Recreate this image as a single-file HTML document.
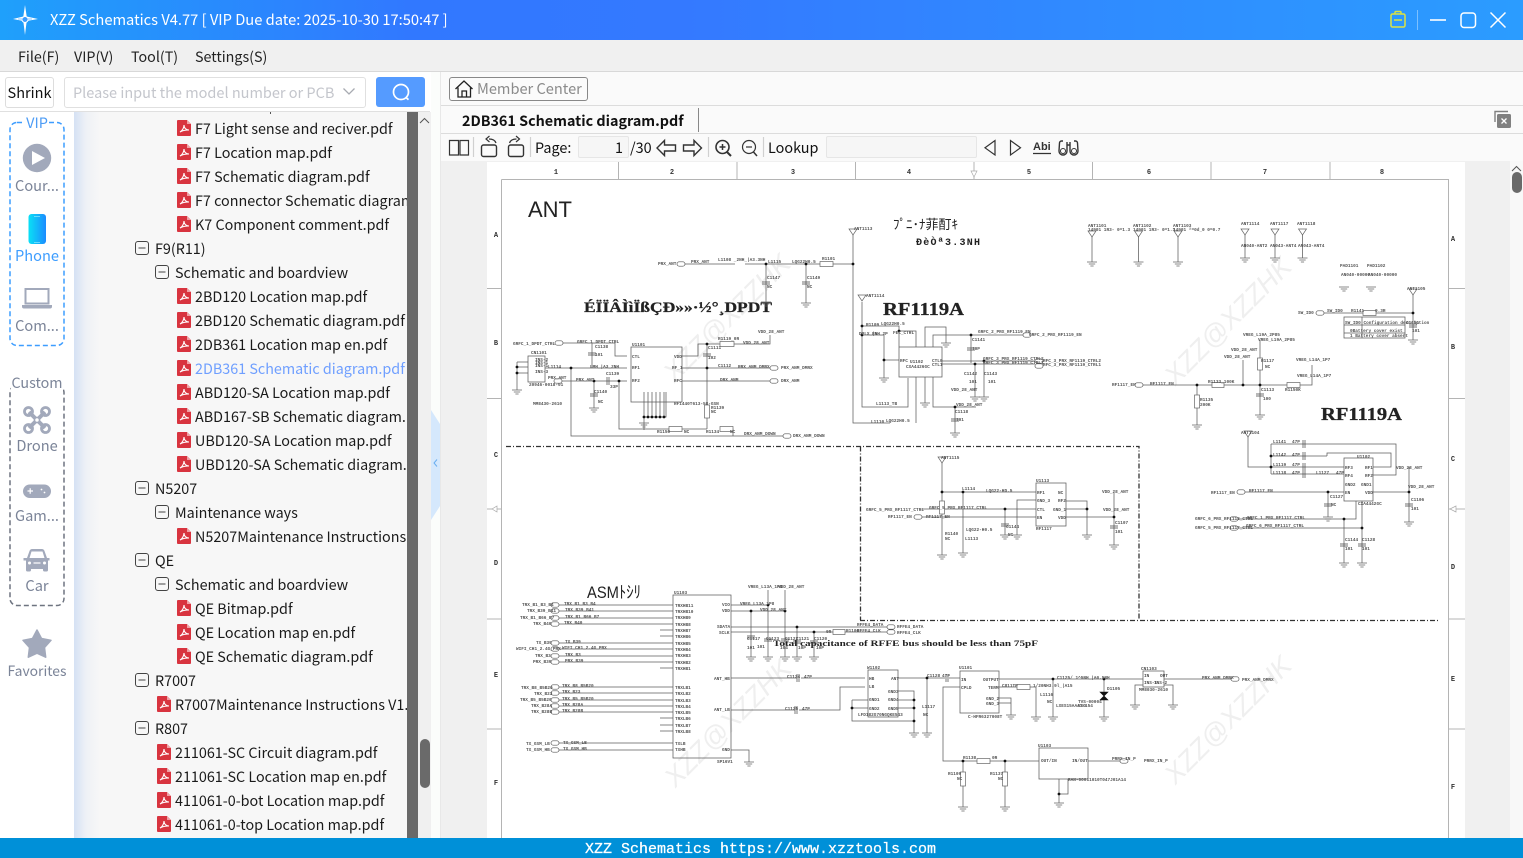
<!DOCTYPE html>
<html><head><meta charset="utf-8"><title>XZZ Schematics</title>
<style>
html,body{margin:0;padding:0;width:1523px;height:858px;overflow:hidden;background:#fff}
body{position:relative;font-family:"Noto Sans CJK SC","Liberation Sans",sans-serif;font-size:14.35px;color:#222}
.a{position:absolute;white-space:nowrap}
#tree{position:absolute;left:74px;top:112px;width:333px;height:726px;overflow:hidden;background:linear-gradient(90deg,#d5e1f4 0,#eef1f6 12px,#f7f7f7 26px);padding-top:5px;box-sizing:border-box}
.r{position:relative;height:24px;line-height:24px;white-space:nowrap;color:#1a1a1a;font-size:14.35px}
.r svg{position:absolute}
.f3{padding-left:121px}.f3 svg{left:103px;top:3px}
.f2{padding-left:101px}.f2 svg{left:83px;top:3px}
.m1{padding-left:81px}.m1 svg{left:61px;top:4px}
.m2{padding-left:101px}.m2 svg{left:81px;top:4px}
.lb{position:absolute;width:74px;left:0;text-align:center;color:#7b8498;font-size:14.6px;line-height:20px}
text{font-family:"Liberation Mono",monospace}
.t{font-size:4.4px;font-weight:bold;fill:#555}
.h{font-weight:bold;fill:#222}
.sl{font-family:"Liberation Serif",serif;font-weight:bold;fill:#222}
.w{font-family:"Liberation Sans",sans-serif;font-size:27px;fill:#efefef;font-style:italic}
</style></head><body>
<svg width="0" height="0" style="position:absolute"><defs>
<symbol id="pdf" viewBox="0 0 14 16"><path d="M1 0h9l4 4v11a1 1 0 0 1-1 1H1a1 1 0 0 1-1-1V1a1 1 0 0 1 1-1z" fill="#d8343f"/><path d="M10 0l4 4h-4z" fill="#f0a0a5"/><path d="M3 12c2-1 4-4 4-7 0 3 2 5 5 5-3 0-6 0-9 2z" fill="none" stroke="#fff" stroke-width="1.1"/></symbol>
<symbol id="min" viewBox="0 0 14 14"><rect x=".5" y=".5" width="13" height="13" rx="2.5" fill="none" stroke="#444"/><path d="M3.5 7h7" stroke="#444"/></symbol>
<g id="g"><path d="M-5 0h10M-3.2 2h6.4M-1.6 4h3.2" fill="none" stroke="#666" stroke-width=".7"/></g>
<g id="ant"><path d="M-4-3h8L0 3z" fill="none" stroke="#666" stroke-width=".7"/></g>
<g id="cap"><path d="M-4-1h8M-4 1h8" fill="none" stroke="#444" stroke-width=".8"/></g>
<g id="port"><rect x="0" y="-2.2" width="8" height="4.4" rx="2.2" fill="#fff" stroke="#555" stroke-width=".7"/></g>
</defs></svg>

<!-- title bar -->
<div class="a" style="left:0;top:0;width:1523px;height:40px;background:linear-gradient(90deg,#1fa0fb 0,#3178ff 27%,#3479ff 45%,#2f8dff 75%,#2b9cff 100%)"></div>
<svg class="a" style="left:10px;top:4px" width="32" height="32" viewBox="0 0 32 32"><path d="M15 1l1.700 11.500L28 15l-11.300 2L15 31l-1.700-14L3 15l10.300-2.500z" fill="#fff"/><circle cx="15" cy="15.500" r="3" fill="#3b9cff" stroke="#fff"/><path d="M8 15h14" stroke="#3b9cff" stroke-width=".6"/></svg>
<div class="a" style="left:50px;top:9px;color:#fff;line-height:22px;font-size:14.7px">XZZ Schematics V4.77 [ VIP Due date: 2025-10-30 17:50:47 ]</div>
<svg class="a" style="left:1385px;top:5px" width="130" height="30" viewBox="1385 5 130 30" fill="none"><path d="M1391 15.500a1.500 1.500 0 0 1 1.500-1.500h11a1.500 1.500 0 0 1 1.500 1.500v10a1.500 1.500 0 0 1-1.500 1.500h-11a1.500 1.500 0 0 1-1.500-1.500zM1395 14v-1.500a1 1 0 0 1 1-1h4a1 1 0 0 1 1 1V14M1394 20h8" stroke="#dbe343" stroke-width="1.500"/><path d="M1417.500 10v20" stroke="#7cc0ff"/><path d="M1430 20h16" stroke="#fff" stroke-width="1.600"/><rect x="1461" y="13" width="14.500" height="14.500" rx="3" stroke="#fff" stroke-width="1.500"/><path d="M1490.500 12.500l15 15M1505.500 12.500l-15 15" stroke="#fff" stroke-width="1.500"/></svg>

<!-- menu -->
<div class="a" style="left:0;top:40px;width:1523px;height:31px;background:#f0f0f0;border-bottom:1px solid #d8d8d8"></div>
<div class="a" style="left:18px;top:46px;line-height:22px;font-size:14.3px">File(F)</div>
<div class="a" style="left:74px;top:46px;line-height:22px;font-size:14.3px">VIP(V)</div>
<div class="a" style="left:131px;top:46px;line-height:22px;font-size:14.3px">Tool(T)</div>
<div class="a" style="left:195px;top:46px;line-height:22px;font-size:14.3px">Settings(S)</div>

<!-- left toolbar -->
<div class="a" style="left:0;top:72px;width:430px;height:39px;background:#fff;border-bottom:1px solid #e0e0e0"></div>
<div class="a" style="left:5px;top:77px;width:47px;height:29px;border:1px solid #ddd;border-radius:3px;text-align:center;line-height:29px;background:#fff;font-size:14.5px;color:#111">Shrink</div>
<div class="a" style="left:64px;top:77px;width:292px;height:29px;border:1px solid #e0e0e0;border-radius:3px;background:#fff;line-height:29px;color:#c4c6cc;padding-left:8px;font-size:14.5px">Please input the model number or PCB</div>
<svg class="a" style="left:342px;top:86px" width="14" height="12" fill="none"><path d="M1.500 2.500l5.500 5.500 5.500-5.500" stroke="#a8abb2" stroke-width="1.300"/></svg>
<div class="a" style="left:376px;top:77px;width:49px;height:30px;background:#559bff;border-radius:3px"></div>
<svg class="a" style="left:388px;top:80px" width="26" height="24" fill="none"><circle cx="13" cy="12" r="7.500" stroke="#fff" stroke-width="1.700"/><path d="M18 17.500l2.500 2.200" stroke="#fff" stroke-width="1.700"/></svg>

<!-- side column -->
<div class="a" style="left:0;top:112px;width:74px;height:726px;background:#fff"></div>
<svg class="a" style="left:0;top:112px" width="74" height="726" viewBox="0 112 74 726">
<rect x="10" y="122.500" width="54" height="223" rx="7" fill="none" stroke="#3d9dff" stroke-width="1.500" stroke-dasharray="5 3"/>
<rect x="10" y="385.500" width="54" height="220" rx="7" fill="none" stroke="#6e7480" stroke-width="1.500" stroke-dasharray="5 3"/>
<circle cx="37" cy="158" r="14.200" fill="#a2a9bb"/><path d="M32 151l13 7-13 7z" fill="#fff"/>
<defs><linearGradient id="ph" x1="0" x2="1" y1="0" y2="0"><stop offset="0" stop-color="#0ae0f5"/><stop offset="1" stop-color="#1b8cff"/></linearGradient></defs>
<rect x="28.500" y="214" width="17.500" height="30" rx="3" fill="url(#ph)"/><path d="M34 216.500h6M34 242.500h6" stroke="#bff" stroke-width=".6"/>
<path d="M25.500 289h23v14.500h-23z" fill="none" stroke="#a2a9bb" stroke-width="2"/><path d="M22 305h30v1.500a2 2 0 0 1-2 2H24a2 2 0 0 1-2-2z" fill="#a2a9bb"/>
<g fill="none" stroke="#a2a9bb"><circle cx="28.500" cy="411.500" r="4" stroke-width="2.800"/><circle cx="45.500" cy="411.500" r="4" stroke-width="2.800"/><circle cx="28.500" cy="428.500" r="4" stroke-width="2.800"/><circle cx="45.500" cy="428.500" r="4" stroke-width="2.800"/><path d="M29 412l16 16M45 412l-16 16" stroke-width="4"/><circle cx="37" cy="420" r="2.500" stroke-width="1.500" fill="#fff"/></g>
<rect x="23" y="484.500" width="28" height="13.500" rx="6.700" fill="#a2a9bb"/><path d="M27.500 491h5.500M30.200 488.200v5.500" stroke="#fff" stroke-width="1.200"/><circle cx="41.500" cy="489.500" r=".9" fill="#fff"/><circle cx="44.500" cy="492.500" r=".9" fill="#fff"/>
<path d="M27 558l2.500-7a3 3 0 0 1 3-2h9a3 3 0 0 1 3 2l2.500 7h2.500v2.500H48v9.500a1.500 1.500 0 0 1-1.500 1.500h-2A1.500 1.500 0 0 1 43 570v-1H31v1a1.500 1.500 0 0 1-1.500 1.500h-2A1.500 1.500 0 0 1 26 570v-9.500h-2.500V558z" fill="#a2a9bb"/><path d="M29.500 558l2-6.500h11l2 6.500z" fill="#fff"/><circle cx="29.500" cy="563" r="1.500" fill="#fff"/><circle cx="44.500" cy="563" r="1.500" fill="#fff"/><path d="M33.500 563h7" stroke="#fff" stroke-width="1.200"/>
<path d="M37 630l4.500 8.500 9.500 1.800-6.500 7.200 1.200 9.700-8.700-4-8.700 4 1.200-9.700-6.500-7.200 9.500-1.800z" fill="#a2a9bb" stroke="#a2a9bb" stroke-width="1.500" stroke-linejoin="round"/>
</svg>
<div class="a" style="left:25px;top:114px;width:24px;background:#fff;text-align:center;line-height:17px;color:#4d9cf5;font-size:14.5px">VIP</div>
<div class="a" style="left:11px;top:374px;width:52px;background:#fff;text-align:center;line-height:18px;color:#7b8498;font-size:14.3px">Custom</div>
<div class="lb" style="top:176px">Cour...</div>
<div class="lb" style="top:246px;color:#3d9dff">Phone</div>
<div class="lb" style="top:316px">Com...</div>
<div class="lb" style="top:436px">Drone</div>
<div class="lb" style="top:506px">Gam...</div>
<div class="lb" style="top:576px">Car</div>
<div class="lb" style="top:661px;font-size:13.9px">Favorites</div>

<!-- tree -->
<div id="tree">
<div class="r f3"><svg width="14" height="16"><use href="#pdf"/></svg>F7 Light sense and reciver.pdf</div>
<div class="r f3"><svg width="14" height="16"><use href="#pdf"/></svg>F7 Location map.pdf</div>
<div class="r f3"><svg width="14" height="16"><use href="#pdf"/></svg>F7 Schematic diagram.pdf</div>
<div class="r f3"><svg width="14" height="16"><use href="#pdf"/></svg>F7 connector Schematic diagram.pdf</div>
<div class="r f3"><svg width="14" height="16"><use href="#pdf"/></svg>K7 Component comment.pdf</div>
<div class="r m1"><svg width="14" height="14"><use href="#min"/></svg>F9(R11)</div>
<div class="r m2"><svg width="14" height="14"><use href="#min"/></svg>Schematic and boardview</div>
<div class="r f3"><svg width="14" height="16"><use href="#pdf"/></svg>2BD120 Location map.pdf</div>
<div class="r f3"><svg width="14" height="16"><use href="#pdf"/></svg>2BD120 Schematic diagram.pdf</div>
<div class="r f3"><svg width="14" height="16"><use href="#pdf"/></svg>2DB361 Location map en.pdf</div>
<div class="r f3" style="color:#6f9fff"><svg width="14" height="16"><use href="#pdf"/></svg>2DB361 Schematic diagram.pdf</div>
<div class="r f3"><svg width="14" height="16"><use href="#pdf"/></svg>ABD120-SA Location map.pdf</div>
<div class="r f3"><svg width="14" height="16"><use href="#pdf"/></svg>ABD167-SB Schematic diagram.pdf</div>
<div class="r f3"><svg width="14" height="16"><use href="#pdf"/></svg>UBD120-SA Location map.pdf</div>
<div class="r f3"><svg width="14" height="16"><use href="#pdf"/></svg>UBD120-SA Schematic diagram.pdf</div>
<div class="r m1"><svg width="14" height="14"><use href="#min"/></svg>N5207</div>
<div class="r m2"><svg width="14" height="14"><use href="#min"/></svg>Maintenance ways</div>
<div class="r f3"><svg width="14" height="16"><use href="#pdf"/></svg>N5207Maintenance Instructions V1.pdf</div>
<div class="r m1"><svg width="14" height="14"><use href="#min"/></svg>QE</div>
<div class="r m2"><svg width="14" height="14"><use href="#min"/></svg>Schematic and boardview</div>
<div class="r f3"><svg width="14" height="16"><use href="#pdf"/></svg>QE Bitmap.pdf</div>
<div class="r f3"><svg width="14" height="16"><use href="#pdf"/></svg>QE Location map en.pdf</div>
<div class="r f3"><svg width="14" height="16"><use href="#pdf"/></svg>QE Schematic diagram.pdf</div>
<div class="r m1"><svg width="14" height="14"><use href="#min"/></svg>R7007</div>
<div class="r f2"><svg width="14" height="16"><use href="#pdf"/></svg>R7007Maintenance Instructions V1.pdf</div>
<div class="r m1"><svg width="14" height="14"><use href="#min"/></svg>R807</div>
<div class="r f2"><svg width="14" height="16"><use href="#pdf"/></svg>211061-SC Circuit diagram.pdf</div>
<div class="r f2"><svg width="14" height="16"><use href="#pdf"/></svg>211061-SC Location map en.pdf</div>
<div class="r f2"><svg width="14" height="16"><use href="#pdf"/></svg>411061-0-bot Location map.pdf</div>
<div class="r f2"><svg width="14" height="16"><use href="#pdf"/></svg>411061-0-top Location map.pdf</div>
</div>
<div class="a" style="left:270px;top:112px;width:1px;height:2px;background:#555"></div>
<!-- tree scrollbars -->
<div class="a" style="left:407px;top:112px;width:11px;height:726px;background:#696969"></div>
<div class="a" style="left:418px;top:112px;width:13px;height:726px;background:#f0f0f0"></div>
<svg class="a" style="left:418px;top:114px" width="13" height="12" fill="none"><path d="M2 9l4.500-4.500L11 9" stroke="#555"/></svg>
<div class="a" style="left:419.500px;top:739px;width:10px;height:49px;background:#6a6a6a;border-radius:5px"></div>
<div class="a" style="left:431px;top:72px;width:10px;height:766px;background:#fbfdfb;border-right:1px solid #e8e8e8;box-sizing:border-box"></div>
<svg class="a" style="left:431px;top:408px" width="10" height="114"><path d="M0 2l9 14v82L0 112z" fill="#d5e8fc"/><path d="M6 51.500l-3 3.500 3 3.500" fill="none" stroke="#6aaef0"/></svg>

<!-- right pane heads -->
<div class="a" style="left:441px;top:72px;width:1082px;height:33px;background:#fafafa;border-bottom:1px solid #dcdcdc"></div>
<div class="a" style="left:441px;top:106px;width:1082px;height:27px;background:#fafafa;border-bottom:1px solid #dcdcdc"></div>
<div class="a" style="left:441px;top:134px;width:1082px;height:27px;background:#fafafa"></div>
<div class="a" style="left:449px;top:77px;width:137px;height:22px;border:1px solid #888;border-radius:3px;background:#fbfbfb"></div>
<svg class="a" style="left:454px;top:79px" width="21" height="20" fill="none" stroke="#222" stroke-width="1.300"><path d="M1.500 10L10 2l8.500 8M4 8.500V18h12.500V8.500M8 18v-6h4.500v6"/></svg>
<div class="a" style="left:477px;top:78px;line-height:22px;color:#8b8b8b;font-size:14.6px">Member Center</div>
<div class="a" style="left:462px;top:109px;line-height:23px;font-weight:bold;color:#111;font-size:14.35px">2DB361 Schematic diagram.pdf</div>
<div class="a" style="left:698px;top:108px;width:1px;height:24px;background:#888"></div>
<svg class="a" style="left:1492px;top:108px" width="22" height="22" fill="none"><path d="M3 14V3.500h13" stroke="#808080" stroke-width="1.400"/><rect x="5" y="6" width="14" height="14" rx="1.500" fill="#808080"/><path d="M9.500 10.500l5 5M14.500 10.500l-5 5" stroke="#fff" stroke-width="1.300"/></svg>

<!-- pdf toolbar -->
<svg class="a" style="left:445px;top:134px" width="640" height="27" viewBox="445 134 640 27" fill="none" stroke="#333" stroke-width="1.200">
<path d="M449.500 140.500h9v14.500h-9zM460 140.500h8.500v14.500H460z"/>
<path d="M473.500 137v20M530.500 137v20M708.500 137v20M763.500 137v20" stroke="#d0d0d0"/>
<rect x="481.500" y="145" width="15" height="11.500" rx="2" stroke-width="1.400"/><path d="M496 143c-1-3-4-4-7-4M489.500 136l-3.500 3 3.500 3" stroke-width="1.200"/>
<rect x="508.500" y="145" width="15" height="11.500" rx="2" stroke-width="1.400"/><path d="M509.500 143c1-3 4-4 7-4M516 136l3.500 3-3.500 3" stroke-width="1.200"/>
<path d="M657 148l7.500-7.500v4.500h11v6h-11v4.500z" stroke-width="1.400"/>
<path d="M701.500 148l-7.500-7.500v4.500h-10.500v6H694v4.500z" stroke-width="1.400"/>
<circle cx="722.500" cy="147" r="6.500" stroke-width="1.600"/><path d="M719.500 147h6M722.500 144v6" stroke-width="1.500"/><path d="M727 152l4 4" stroke-width="2"/>
<circle cx="749" cy="147" r="6.500" stroke-width="1.200"/><path d="M746 147h6" stroke-width="1.200"/><path d="M753.500 152l3.500 4" stroke-width="1.500"/>
<path d="M995 140.500v14.500l-10-7.200zM1010.500 140.500v14.500l10-7.200z" stroke-width="1.200"/>
<path d="M1033 153.500h18" stroke-width="1.200"/>
<path d="M1063 141h-1.500a2 2 0 0 0-2 2l-.5 8a4 4 0 0 0 8 0v-9M1074 141h1.500a2 2 0 0 1 2 2l.5 8a4 4 0 0 1-8 0v-9M1067 145h3" stroke-width="1.400"/><circle cx="1063" cy="151" r="2.500" stroke-width="1"/><circle cx="1074" cy="151" r="2.500" stroke-width="1"/>
</svg>
<div class="a" style="left:535px;top:137px;line-height:22px;color:#111;font-size:14.4px">Page:</div>
<div class="a" style="left:578px;top:136px;width:44px;height:20px;border:1px solid #e6e6e6;border-radius:2px;background:#f6f6f6;text-align:right;padding-right:5px;line-height:21px;color:#111">1</div>
<div class="a" style="left:630px;top:137px;line-height:22px;color:#111;font-size:14.4px">/30</div>
<div class="a" style="left:768px;top:137px;line-height:22px;color:#111;font-size:14.4px">Lookup</div>
<div class="a" style="left:826px;top:136px;width:149px;height:20px;border:1px solid #e6e6e6;border-radius:2px;background:#f6f6f6"></div>
<div class="a" style="left:1033px;top:140px;line-height:14px;font-size:11px;font-weight:bold;color:#333;font-family:'Liberation Sans',sans-serif">Abi</div>

<!-- doc area -->
<div class="a" style="left:441px;top:161px;width:1069px;height:677px;background:#f0f0f0"></div>
<div class="a" style="left:487px;top:162px;width:978px;height:676px;background:#fff"></div>
<div class="a" style="left:1510px;top:161px;width:13px;height:677px;background:#f8f8f8"></div>
<svg class="a" style="left:1510px;top:164px" width="13" height="10" fill="none"><path d="M2 7l4.500-4.500L11 7" stroke="#555"/></svg>
<div class="a" style="left:1512px;top:172px;width:10px;height:21px;background:#6a6a6a;border-radius:5px"></div>

<!-- schematic -->
<svg class="a" style="left:487px;top:162px" width="978" height="676" viewBox="487 162 978 676">
<g transform="rotate(-45 727 318)"><text x="727" y="327" text-anchor="middle" class="w">XZZ@XZZHK</text></g>
<g transform="rotate(-45 1228 321)"><text x="1228" y="330" text-anchor="middle" class="w">XZZ@XZZHK</text></g>
<g transform="rotate(-45 728 723)"><text x="728" y="732" text-anchor="middle" class="w">XZZ@XZZHK</text></g>
<g transform="rotate(-45 1228 720)"><text x="1228" y="729" text-anchor="middle" class="w">XZZ@XZZHK</text></g>

<!-- frame -->
<path d="M501.500 179.500H1448.500V838M501.500 179.500V838M618.500 162v17M737 162v17M855.500 162v17M974 162v17M1092.500 162v17M1211 162v17M1330 162v17M487 288.500h14M487 398.500h14M487 509h14M487 619h14M487 729h14M1449 288.500h16M1449 398.500h16M1449 509h16M1449 619h16M1449 729h16" fill="none" stroke="#b4b4b4" stroke-width="1"/>
<path d="M971 171h6l-3 6zM497 506v6l-5-3zM1450 509l6-3v6z" fill="#fff" stroke="#aaa" stroke-width=".7"/>
<g font-size="7" font-weight="bold" fill="#333" text-anchor="middle"><text x="556" y="174">1</text><text x="672" y="174">2</text><text x="793" y="174">3</text><text x="909" y="174">4</text><text x="1029" y="174">5</text><text x="1149" y="174">6</text><text x="1265" y="174">7</text><text x="1382" y="174">8</text>
<text x="496" y="237">A</text><text x="496" y="345">B</text><text x="496" y="457">C</text><text x="496" y="565">D</text><text x="496" y="677">E</text><text x="496" y="785">F</text>
<text x="1453" y="241">A</text><text x="1453" y="349">B</text><text x="1453" y="461">C</text><text x="1453" y="569">D</text><text x="1453" y="681">E</text><text x="1453" y="789">F</text></g>

<!-- dashed -->
<path d="M506 446.500H1139V620M860.500 446.500V620M860 620.500H1440" fill="none" stroke="#333" stroke-width="1.300" stroke-dasharray="5 2 1 2"/>

<!-- big text -->
<text x="528" y="217" font-size="22" style="font-family:'Liberation Sans',sans-serif" fill="#222">ANT</text>
<text x="584" y="312" font-size="15" class="sl" textLength="188" lengthAdjust="spacingAndGlyphs" stroke="#222" stroke-width=".25">ÉÏÏÂÌìÏßÇÐ»»·½°¸DPDT</text>
<text x="883" y="315" font-size="18" class="sl" textLength="81" lengthAdjust="spacingAndGlyphs" stroke="#222" stroke-width=".3">RF1119A</text>
<text x="1321" y="420" font-size="18" class="sl" textLength="81" lengthAdjust="spacingAndGlyphs" stroke="#222" stroke-width=".3">RF1119A</text>
<text x="893" y="229" font-size="13" fill="#222" style="font-family:'Liberation Sans','Noto Sans CJK JP',sans-serif">ﾌﾟﾆ･ﾅ菲酊ｷ</text>
<text x="916" y="245" font-size="10" class="h" textLength="64">ÐèÒª3.3NH</text>
<text x="587" y="598" font-size="17" fill="#222" textLength="54" lengthAdjust="spacingAndGlyphs" style="font-family:'Liberation Sans','Noto Sans CJK JP',sans-serif">ASMﾄｼﾘ</text>
<text x="773" y="646" font-size="8.500" class="sl" textLength="265" lengthAdjust="spacingAndGlyphs">Total capacitance of RFFE bus should be less than 75pF</text>

<!-- wires -->
<path fill="none" stroke="#5c5c5c" stroke-width=".75" d="
M685 264H735M745 264H820M833 264H853M853 235V423H890M766 264V302M806 264V303
M562 343H615V356H627M592 343V368M528 356h17v26h-17zM517 362V390M517 362h11M517 367h11M517 373h11M545 368H627M571 368V436H783M562 381H627M594 381V408M619 381V429H707M631 347h51v55h-51z
M682 356H698V344H720M734 344H770V335M707 344V405M707 418V429M682 368H770M682 381H770M720 429H733V436
M644 392V417H666V392M648 392V417M652 392V417M656 392V417M660 392V417M664 392V417M644 417V430
M862 302V407H908V378M862 326H899V347M899 331H916V347M925 347V327H946V343M884 335H862M884 335V378M884 360H899M916 377V423M925 377V403M933 377V407H976M955 407V433M933 347V335H1023M971 335V363M942 361H1035M942 364H1035M984 361V397M975 364V397M899 347h43v30h-43z
M1142 385H1312V365M1197 385V395M1197 408V425M1243 385V360M1260 340V358M1260 370V415M1092 236V262M1138.500 236V262M1178 236V262M1245 235V258M1275 235V258M1302.500 235V258M1413 295V340M1323 313H1363M1376 313H1413M1344 317h61v21h-61zM1344 325h61M1344 333h61M1362 317v21
M558 605H673M558 611H673M558 618H673M558 624H673M660 630h13M660 636h13M558 643H673M558 649H673M558 656H673M558 662H673M660 668h13M558 687H673M558 693H673M558 700H673M558 706H673M558 712H673M660 718h13M660 725h13M660 731h13M558 743H673M558 750H673M673 595h58v163h-58z
M731 605H768M731 611H785M751 611V657M768 590V657M785 590V657M731 627H887M731 632H833M845 632H887M797 627V657M814 632V657M731 678H797M801 678H865M731 710H795M799 710H840V687H865M731 750H749V762M868 670h30v47h-30zM898 678H945M949 678H960M927 678V733M898 691H914V733M898 700H914M898 708H914M852 700H868M852 708H868M852 700V721H914
M960 671h39v42h-39zM960 687H943V761H977M990 761H1033V761H1039M963 761V772M963 786V807M1005 761V772M1005 786V807M1039 748h49v31h-49zM1088 761H1120M1059 779V794H1068V779M1059 794V803M999 679H1143M1164 679H1231M1143 671h21v16h-21zM1143 685H1135V705M1164 685H1173V705M999 687H1017M1030 687H1036V717M1053 679V717M1104 679V717M999 698H1011V715M999 703H1011
M942 463V501M942 514V555M942 492H1036M963 492V553M922 509H1036M922 517H1036M1005 509V535M1017 535V500H1036M1036 483h30v43h-30zM1066 517H1114M1114 493V545M1066 501H1087V535M1066 509H1087
M1271 444H1396V475H1373M1327 456V453H1391V467H1373M1271 456H1327M1271 467H1344M1271 474H1344M1271 444V474M1248 437V467H1271M1344 458h29v43h-29zM1245 492H1344M1328 492V517M1373 492H1409M1409 467V522M1238 519H1356V501M1238 528H1362V501M1344 519V563M1362 528V563
"/>
<!-- resistors -->
<g fill="#fff" stroke="#666" stroke-width=".7"><rect x="820" y="261.500" width="13" height="5"/><rect x="720" y="341.500" width="14" height="5"/><rect x="704.500" y="405" width="5" height="13"/><rect x="669" y="426.500" width="13" height="5"/><rect x="720" y="426.500" width="13" height="5"/><rect x="1194.500" y="395" width="5" height="13"/><rect x="1212" y="382.500" width="12" height="5"/><rect x="1257.500" y="358" width="5" height="12"/><rect x="1287" y="382.500" width="13" height="5"/><rect x="1363" y="310.500" width="13" height="5"/><rect x="833" y="629.500" width="12" height="5"/><rect x="977" y="758.500" width="13" height="5"/><rect x="960.500" y="772" width="5" height="14"/><rect x="1002.500" y="772" width="5" height="14"/><rect x="1017" y="684.500" width="13" height="5"/><rect x="939.500" y="501" width="5" height="13"/></g>
<!-- ports -->
<g><use href="#port" x="677" y="264"/><use href="#port" x="555" y="343"/><use href="#port" x="770" y="368"/><use href="#port" x="770" y="381"/><use href="#port" x="783" y="436"/><use href="#port" x="554" y="381"/><use href="#port" x="1023" y="335"/><use href="#port" x="1035" y="361"/><use href="#port" x="1035" y="366"/><use href="#port" x="1135" y="385"/><use href="#port" x="1316" y="313"/><use href="#port" x="1231" y="679"/><use href="#port" x="1120" y="761"/><use href="#port" x="1237" y="492"/><use href="#port" x="1230" y="519"/><use href="#port" x="1230" y="528"/><use href="#port" x="914" y="517"/><use href="#port" x="887" y="627"/><use href="#port" x="887" y="632"/>
<use href="#port" x="551" y="605"/><use href="#port" x="551" y="611"/><use href="#port" x="551" y="618"/><use href="#port" x="551" y="624"/><use href="#port" x="551" y="643"/><use href="#port" x="551" y="649"/><use href="#port" x="551" y="656"/><use href="#port" x="551" y="662"/><use href="#port" x="551" y="687"/><use href="#port" x="551" y="693"/><use href="#port" x="551" y="700"/><use href="#port" x="551" y="706"/><use href="#port" x="551" y="712"/><use href="#port" x="551" y="743"/><use href="#port" x="551" y="750"/></g>
<!-- antennas -->
<use href="#ant" x="853" y="232"/><use href="#ant" x="862" y="298"/><use href="#ant" x="1092" y="234"/><use href="#ant" x="1138.500" y="234"/><use href="#ant" x="1178" y="234"/><use href="#ant" x="1245" y="232"/><use href="#ant" x="1275" y="232"/><use href="#ant" x="1302.500" y="232"/><use href="#ant" x="1413" y="292"/><use href="#ant" x="1248" y="434"/><use href="#ant" x="942" y="460"/>
<!-- grounds -->
<use href="#g" x="766" y="302"/><use href="#g" x="806" y="303"/><use href="#g" x="517" y="390"/><use href="#g" x="594" y="408"/><use href="#g" x="644" y="423"/><use href="#g" x="884" y="378"/><use href="#g" x="946" y="343"/><use href="#g" x="925" y="403"/><use href="#g" x="955" y="433"/><use href="#g" x="975" y="397"/><use href="#g" x="984" y="397"/><use href="#g" x="1197" y="425"/><use href="#g" x="1260" y="415"/><use href="#g" x="1092" y="262"/><use href="#g" x="1138.500" y="262"/><use href="#g" x="1178" y="262"/><use href="#g" x="1245" y="258"/><use href="#g" x="1275" y="258"/><use href="#g" x="1302.500" y="258"/><use href="#g" x="1344" y="287"/><use href="#g" x="1371" y="287"/><use href="#g" x="1413" y="340"/><use href="#g" x="751" y="657"/><use href="#g" x="768" y="657"/><use href="#g" x="785" y="657"/><use href="#g" x="797" y="657"/><use href="#g" x="814" y="657"/><use href="#g" x="749" y="762"/><use href="#g" x="914" y="733"/><use href="#g" x="927" y="733"/><use href="#g" x="963" y="807"/><use href="#g" x="1005" y="807"/><use href="#g" x="1059" y="803"/><use href="#g" x="1135" y="705"/><use href="#g" x="1173" y="705"/><use href="#g" x="1011" y="715"/><use href="#g" x="1036" y="717"/><use href="#g" x="1053" y="717"/><use href="#g" x="1104" y="717"/><use href="#g" x="942" y="555"/><use href="#g" x="963" y="553"/><use href="#g" x="1005" y="535"/><use href="#g" x="1017" y="535"/><use href="#g" x="1087" y="535"/><use href="#g" x="1114" y="545"/><use href="#g" x="1328" y="517"/><use href="#g" x="1409" y="522"/><use href="#g" x="1344" y="563"/><use href="#g" x="1362" y="563"/>
<!-- caps -->
<use href="#cap" x="766" y="283"/><use href="#cap" x="806" y="283"/><use href="#cap" x="592" y="354"/><use href="#cap" x="594" y="395"/><use href="#cap" x="707" y="355"/><use href="#cap" x="971" y="349"/><use href="#cap" x="955" y="420"/><use href="#cap" x="1260" y="395"/><use href="#cap" x="751" y="637"/><use href="#cap" x="768" y="640"/><use href="#cap" x="785" y="640"/><use href="#cap" x="797" y="642"/><use href="#cap" x="814" y="642"/><use href="#cap" x="1005" y="525"/><use href="#cap" x="1114" y="527"/><use href="#cap" x="1328" y="505"/><use href="#cap" x="1409" y="505"/><use href="#cap" x="1344" y="545"/><use href="#cap" x="1362" y="545"/><use href="#cap" x="1413" y="326"/>
<path d="M607 377v8M609 377v8M797 674v8M799 674v8M795 706v8M797 706v8M946 674v8M948 674v8M1303 440v8M1305 440v8M1303 452v8M1305 452v8M1303 463v8M1305 463v8M1303 470v8M1305 470v8" stroke="#444" stroke-width=".7" fill="none"/>
<!-- diode -->
<path d="M1100 692h8l-8 8h8z" fill="#111" stroke="#111" stroke-width=".6"/>
<!-- nodes -->
<g fill="#111"><circle cx="853" cy="264" r="1.400"/><circle cx="766" cy="264" r="1.400"/><circle cx="806" cy="264" r="1.400"/><circle cx="517" cy="367" r="1.400"/><circle cx="517" cy="373" r="1.400"/><circle cx="571" cy="368" r="1.400"/><circle cx="594" cy="381" r="1.400"/><circle cx="619" cy="381" r="1.400"/><circle cx="707" cy="344" r="1.400"/><circle cx="707" cy="368" r="1.400"/><circle cx="644" cy="417" r="1.400"/><circle cx="648" cy="417" r="1.400"/><circle cx="652" cy="417" r="1.400"/><circle cx="656" cy="417" r="1.400"/><circle cx="660" cy="417" r="1.400"/><circle cx="664" cy="417" r="1.400"/><circle cx="862" cy="326" r="1.400"/><circle cx="862" cy="335" r="1.400"/><circle cx="884" cy="360" r="1.400"/><circle cx="971" cy="335" r="1.400"/><circle cx="984" cy="361" r="1.400"/><circle cx="975" cy="364" r="1.400"/><circle cx="955" cy="407" r="1.400"/><circle cx="899" cy="331" r="1.400"/><circle cx="1197" cy="385" r="1.400"/><circle cx="1243" cy="385" r="1.400"/><circle cx="1260" cy="385" r="1.400"/><circle cx="1413" cy="313" r="1.400"/><circle cx="751" cy="611" r="1.400"/><circle cx="768" cy="605" r="1.400"/><circle cx="785" cy="611" r="1.400"/><circle cx="797" cy="627" r="1.400"/><circle cx="814" cy="632" r="1.400"/><circle cx="927" cy="678" r="1.400"/><circle cx="914" cy="700" r="1.400"/><circle cx="914" cy="708" r="1.400"/><circle cx="914" cy="721" r="1.400"/><circle cx="852" cy="708" r="1.400"/><circle cx="963" cy="761" r="1.400"/><circle cx="1005" cy="761" r="1.400"/><circle cx="1053" cy="679" r="1.400"/><circle cx="1104" cy="679" r="1.400"/><circle cx="1059" cy="794" r="1.400"/><circle cx="942" cy="492" r="1.400"/><circle cx="963" cy="492" r="1.400"/><circle cx="1005" cy="509" r="1.400"/><circle cx="1087" cy="509" r="1.400"/><circle cx="1114" cy="517" r="1.400"/><circle cx="1271" cy="456" r="1.400"/><circle cx="1271" cy="467" r="1.400"/><circle cx="1328" cy="492" r="1.400"/><circle cx="1409" cy="492" r="1.400"/><circle cx="1344" cy="519" r="1.400"/><circle cx="1362" cy="528" r="1.400"/></g>
<!-- labels -->
<g class="t">
<text x="658" y="265">PRX_ANT</text><text x="691" y="263">PRX_ANT</text><text x="718" y="261">L1108 _2NH_|A3.3NH</text><text x="768" y="263">L1115</text><text x="792" y="263">LQG22H0.5</text><text x="822" y="260">R1101</text><text x="767" y="279">C1147</text><text x="767" y="288">NC</text><text x="807" y="279">C1149</text><text x="807" y="288">NC</text><text x="854" y="230">ANT1113</text>
<text x="513" y="345">GRFC_1_DPDT_CTRL</text><text x="577" y="343">GRFC_1_DPDT_CTRL</text><text x="595" y="348">C1138</text><text x="595" y="356">101</text><text x="531" y="354">CN1101</text><text x="535" y="361">INS-2</text><text x="535" y="364">INS-1</text><text x="535" y="367">INS-1</text><text x="535" y="373">INS-3</text><text x="529" y="386">20946-0018-01</text><text x="533" y="405">MM8430-2610</text><text x="548" y="368">L1114</text><text x="590" y="368">LMH_|A3_2NH</text><text x="548" y="379">PRX_ANT</text><text x="576" y="381">PRX_ANT</text><text x="606" y="375">C1139</text><text x="610" y="388">33P</text><text x="594" y="393">C1140</text><text x="598" y="403">NC</text><text x="632" y="346">U1101</text><text x="632" y="358">CTL</text><text x="632" y="369">RF1</text><text x="632" y="382">RF2</text><text x="674" y="358">VDD</text><text x="672" y="369">RF_1</text><text x="674" y="382">RFC</text><text x="674" y="405">RF1440T613-58-GSN</text><text x="718" y="340">R1119_0R</text><text x="743" y="344">VDD_28_ANT</text><text x="758" y="333">VDD_28_ANT</text><text x="708" y="349">C1111</text><text x="708" y="359">102</text><text x="718" y="367">C1112</text><text x="738" y="368">RRX_ANM_DMRX</text><text x="781" y="369">PRX_ANM_DMRX</text><text x="720" y="381">DRX_ANM</text><text x="781" y="382">DRX_ANM</text><text x="711" y="409">R1139</text><text x="711" y="413">NC</text><text x="657" y="433">R1150</text><text x="684" y="433">NC</text><text x="706" y="433">R1134</text><text x="730" y="433">NC</text><text x="744" y="435">DRX_ANM_DOWN</text><text x="793" y="437">DRX_ANM_DOWN</text>
<text x="866" y="297">ANT1114</text><text x="866" y="326">R1109</text><text x="881" y="325">LQG22H0.5</text><text x="859" y="335">DPLX_EN</text><text x="872" y="335">|NH_2P</text><text x="893" y="334">FEC_CTRL</text><text x="900" y="362">RFC</text><text x="910" y="363">U1102</text><text x="906" y="368">CXA4426GC</text><text x="932" y="362">CTL0</text><text x="932" y="366">CTL1</text><text x="876" y="405">L1113_TB</text><text x="871" y="423">L1110</text><text x="886" y="422">LQG22H0.5</text><text x="978" y="333">GRFC_2_PRX_RF1119_EN</text><text x="1029" y="336">GRFC_2_PRX_RF1119_EN</text><text x="983" y="360">GRFC_3_PRX_RF1119_CTRL2</text><text x="983" y="364">GRFC_3_PRX_RF1119_CTRL1</text><text x="1043" y="362">RFC_3_PRX_RF1119_CTRL2</text><text x="1043" y="366">RFC_3_PRX_RF1119_CTRL1</text><text x="972" y="341">C1141</text><text x="972" y="350">10P</text><text x="964" y="375">C1142</text><text x="984" y="375">C1143</text><text x="969" y="383">101</text><text x="988" y="383">101</text><text x="951" y="391">VDD_28_ANT</text><text x="956" y="406">VDD_28_ANT</text><text x="955" y="413">C1118</text><text x="956" y="421">101</text>
<text x="1088" y="227">ANT1101</text><text x="1088" y="231">14901 1R3- 0=1.3</text><text x="1133" y="227">ANT1102</text><text x="1133" y="231">14901 1R3- 0=1.3</text><text x="1173" y="227">ANT1103</text><text x="1173" y="231">14901 ²=0d_0 0=0.7</text><text x="1241" y="225">ANT1114</text><text x="1270" y="225">ANT1117</text><text x="1297" y="225">ANT1118</text><text x="1241" y="247">AN040-ANT2</text><text x="1270" y="247">AN043-ANT4</text><text x="1298" y="247">AN043-ANT4</text><text x="1340" y="267">PAD1101</text><text x="1367" y="267">PAD1102</text><text x="1341" y="276">AN040-00000</text><text x="1368" y="276">AN040-00000</text><text x="1407" y="290">ANT1105</text><text x="1298" y="314">SW_ID0</text><text x="1327" y="312">SW_ID0</text><text x="1351" y="312">R1141</text><text x="1375" y="312">0.3R</text><text x="1345" y="324">SW_ID0 Configuration description</text><text x="1350" y="332">0Battery cover exist</text><text x="1350" y="337">1 Battery cover absent</text><text x="1406" y="324">C1151</text><text x="1412" y="332">101</text><text x="1243" y="336">VREG_L19A_2P85</text><text x="1258" y="341">VREG_L19A_2P85</text><text x="1231" y="351">VDD_28_ANT</text><text x="1224" y="358">VDD_28_ANT</text><text x="1261" y="362">R1117</text><text x="1265" y="368">NC</text><text x="1296" y="361">VREG_L14A_1P7</text><text x="1297" y="377">VREG_L14A_1P7</text><text x="1112" y="386">RF1117_EN</text><text x="1150" y="385">RF1117_EN</text><text x="1208" y="383">R1133_100K</text><text x="1285" y="391">R1150K</text><text x="1200" y="401">R1135</text><text x="1200" y="406">200K</text><text x="1261" y="391">C1113</text><text x="1263" y="400">100</text>
</g>
<g class="t">
<text x="522" y="606">TRX_B1_B3_B4</text><text x="527" y="612">TRX_B39_B41</text><text x="520" y="619">TRX_B1_B66_B7</text><text x="533" y="625">TRX_B40</text><text x="536" y="644">TX_B39</text><text x="516" y="650">WIFI_CH1_2.4G_PRX</text><text x="535" y="657">TRX_B3</text><text x="533" y="663">PRX_B39</text><text x="521" y="689">TRX_B8_B5B20</text><text x="534" y="695">TRX_B23</text><text x="520" y="701">TRX_B5_B5B20</text><text x="531" y="707">TRX_B28A</text><text x="531" y="713">TRX_B28B</text><text x="526" y="745">TX_GSM_LB</text><text x="526" y="751">TX_GSM_HB</text>
<text x="564" y="605">TRX_B1_B3_B4</text><text x="565" y="611">TRX_B39_B41</text><text x="565" y="618">TRX_B1_B66_B7</text><text x="564" y="624">TRX_B40</text><text x="565" y="643">TX_B39</text><text x="562" y="649">WIFI_CH1_2.4G_PRX</text><text x="565" y="656">TRX_B3</text><text x="565" y="662">PRX_B39</text><text x="562" y="687">TRX_B8_B5B20</text><text x="562" y="693">TRX_B23</text><text x="562" y="700">TRX_B5_B5B20</text><text x="562" y="706">TRX_B28A</text><text x="562" y="712">TRX_B28B</text><text x="563" y="744">TX_GSM_LB</text><text x="563" y="750">TX_GSM_HB</text>
<text x="674" y="594">U1103</text><text x="675" y="607">TRXHB11</text><text x="675" y="613">TRXHB10</text><text x="675" y="619">TRXHB9</text><text x="675" y="626">TRXHB8</text><text x="675" y="632">TRXHB7</text><text x="675" y="638">TRXHB6</text><text x="675" y="645">TRXHB5</text><text x="675" y="651">TRXHB4</text><text x="675" y="657">TRXHB3</text><text x="675" y="664">TRXHB2</text><text x="675" y="670">TRXHB1</text><text x="675" y="689">TRXLB1</text><text x="675" y="695">TRXLB2</text><text x="675" y="702">TRXLB3</text><text x="675" y="708">TRXLB4</text><text x="675" y="714">TRXLB5</text><text x="675" y="720">TRXLB6</text><text x="675" y="727">TRXLB7</text><text x="675" y="733">TRXLB8</text><text x="675" y="745">TXLB</text><text x="675" y="751">TXHB</text><text x="722" y="606">VIO</text><text x="722" y="612">VDD</text><text x="717" y="628">SDATA</text><text x="719" y="634">SCLK</text><text x="714" y="680">ANT_HB</text><text x="714" y="711">ANT_LB</text><text x="722" y="751">GND</text><text x="717" y="763">SP16V1</text>
<text x="748" y="588">VREG_L13A_1P8</text><text x="778" y="588">VDD_28_ANT</text><text x="740" y="605">VREG_L13A_1P8</text><text x="760" y="611">VDD_28_ANT</text><text x="747" y="640">C1117</text><text x="747" y="649">101</text><text x="766" y="640">C1123</text><text x="757" y="648">101</text><text x="785" y="640">C1122</text><text x="780" y="649">104</text><text x="796" y="640">C1121</text><text x="798" y="649">10P</text><text x="814" y="640">C1120</text><text x="816" y="649">10P</text><text x="857" y="626">RFFE4_DATA</text><text x="857" y="632">RFFE4_CLK</text><text x="897" y="628">RFFE4_DATA</text><text x="897" y="634">RFFE4_CLK</text><text x="846" y="632">R1100</text><text x="826" y="633">0R</text><text x="787" y="678">C1124</text><text x="804" y="678">47P</text><text x="785" y="710">C1125</text><text x="802" y="710">47P</text>
<text x="867" y="669">W1102</text><text x="869" y="680">HB</text><text x="869" y="688">LB</text><text x="869" y="701">GND1</text><text x="869" y="710">GND2</text><text x="891" y="680">ANT</text><text x="888" y="693">GND3</text><text x="888" y="701">GND4</text><text x="888" y="710">GND5</text><text x="858" y="716">LFD182G70NGQKE543</text><text x="922" y="708">L1117</text><text x="923" y="716">NC</text><text x="927" y="677">C1128</text><text x="942" y="677">47P</text>
<text x="959" y="669">U1101</text><text x="961" y="681">IN</text><text x="961" y="689">CPLD</text><text x="983" y="681">OUTPUT</text><text x="988" y="689">TERM</text><text x="986" y="700">GND_2</text><text x="986" y="705">GND_3</text><text x="968" y="718">C-HFR6327008T</text><text x="1002" y="687">C811TP</text><text x="1033" y="687">1/20NH3.9l_|A15</text><text x="1057" y="679">C1125/ 1^5NH_|A0.5NH</text><text x="1040" y="696">L1116</text><text x="1047" y="703">NC</text><text x="1056" y="707">LXES15AAA1-154</text><text x="1078" y="707">ESD</text><text x="1107" y="690">D1105</text><text x="1078" y="703">TVS-00004</text><text x="1141" y="670">CN1103</text><text x="1144" y="677">IN</text><text x="1160" y="677">OUT</text><text x="1144" y="684">INS-1</text><text x="1154" y="684">INS-2</text><text x="1139" y="691">MM8030-2610</text><text x="1202" y="679">PRX_ANM_DMRX</text><text x="1242" y="681">PRX_ANM_DMRX</text>
<text x="963" y="759">R1138</text><text x="992" y="759">0R</text><text x="948" y="775">R1109</text><text x="957" y="780">NC</text><text x="990" y="775">R1137</text><text x="998" y="780">NC</text><text x="1038" y="747">U1103</text><text x="1041" y="762">OUT/IN</text><text x="1072" y="762">IN/OUT</text><text x="1068" y="781">RAN-00011010T047J01A14</text><text x="1112" y="760">PRRX_IN_P</text><text x="1144" y="762">PRRX_IN_P</text>
<text x="941" y="459">ANT1115</text><text x="962" y="490">L1114</text><text x="986" y="492">LQG22-HD.5</text><text x="866" y="511">GRFC_5_PRX_RF1117_CTRL</text><text x="888" y="518">RF1117_EN</text><text x="929" y="509">GRFC_5_PRX_RF1117_CTRL</text><text x="926" y="518">RF1117_EN</text><text x="945" y="535">R1140</text><text x="945" y="540">NC</text><text x="966" y="531">LQG22-H0.5</text><text x="965" y="540">L1113</text><text x="1006" y="528">C1144</text><text x="1008" y="536">NC</text><text x="1036" y="482">U1113</text><text x="1037" y="494">RF1</text><text x="1037" y="502">GND_3</text><text x="1037" y="511">CTL</text><text x="1037" y="519">EN</text><text x="1058" y="494">NC</text><text x="1058" y="502">RF2</text><text x="1053" y="511">GND_1</text><text x="1058" y="519">VDD</text><text x="1036" y="530">RF1117</text><text x="1102" y="493">VDD_28_ANT</text><text x="1103" y="511">VDD_28_ANT</text><text x="1115" y="524">C1107</text><text x="1115" y="533">101</text>
<text x="1241" y="434">ANT1104</text><text x="1273" y="443">L1141</text><text x="1292" y="443">47P</text><text x="1273" y="456">L1142</text><text x="1292" y="456">47P</text><text x="1273" y="466">L1119</text><text x="1292" y="466">47P</text><text x="1273" y="474">L1118</text><text x="1292" y="474">47P</text><text x="1316" y="474">L1127</text><text x="1336" y="474">47P</text><text x="1357" y="458">U1102</text><text x="1345" y="469">RF3</text><text x="1345" y="477">RF4</text><text x="1345" y="486">GND2</text><text x="1345" y="494">EN</text><text x="1365" y="469">RF1</text><text x="1365" y="477">RF2</text><text x="1361" y="486">GND1</text><text x="1365" y="494">VDD</text><text x="1358" y="505">CXA4442GC</text><text x="1211" y="494">RF1117_EN</text><text x="1249" y="492">RF1117_EN</text><text x="1330" y="498">C1127</text><text x="1331" y="506">NC</text><text x="1396" y="469">VDD_28_ANT</text><text x="1408" y="488">VDD_28_ANT</text><text x="1411" y="501">C1106</text><text x="1411" y="510">101</text><text x="1195" y="520">GRFC_6_PRX_RF1113_CTRL</text><text x="1195" y="529">GRFC_5_PRX_RF1117_CTRL</text><text x="1247" y="519">GRFC_1_PRX_RF1117_CTRL</text><text x="1246" y="527">GRFC_6_PRX_RF1117_CTRL</text><text x="1345" y="541">C1144</text><text x="1362" y="541">C1128</text><text x="1345" y="550">101</text><text x="1362" y="550">101</text>
</g>
</svg>

<!-- status bar -->
<div class="a" style="left:0;top:838px;width:1523px;height:20px;background:#0090d8"></div>
<div class="a" style="left:585px;top:840px;line-height:19px;color:#fff;font-family:'Liberation Mono',monospace;font-size:15px;-webkit-text-stroke:.25px #fff">XZZ Schematics https://www.xzztools.com</div>
</body></html>
